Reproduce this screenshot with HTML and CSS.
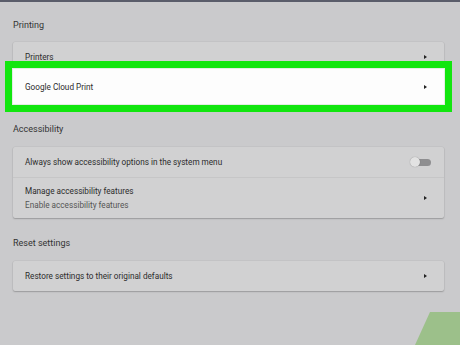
FILE: index.html
```html
<!DOCTYPE html>
<html>
<head>
<meta charset="utf-8">
<link rel="stylesheet" href="styles.css">
</head>
<body>
<div class="topbar"></div>
<main class="page">
  <section class="section">
    <h2 class="label">Printing</h2>
    <div class="card">
      <div class="row row-short"><span class="text">Printers</span><span class="chev"></span></div>
      <div class="row row-hl"><span class="text">Google Cloud Print</span><span class="chev"></span></div>
    </div>
  </section>
  <section class="section">
    <h2 class="label">Accessibility</h2>
    <div class="card">
      <div class="row row-a"><span class="text">Always show accessibility options in the system menu</span><span class="toggle"><span class="knob"></span></span></div>
      <div class="row row-b"><span class="text two"><span>Manage accessibility features</span><span class="sub">Enable accessibility features</span></span><span class="chev"></span></div>
    </div>
  </section>
  <section class="section">
    <h2 class="label">Reset settings</h2>
    <div class="card">
      <div class="row row-c"><span class="text">Restore settings to their original defaults</span><span class="chev"></span></div>
    </div>
  </section>
</main>
<div class="blob"></div>
</body>
</html>
```
FILE: styles.css
```css
html, body {
  margin: 0;
  padding: 0;
  height: 100%;
  overflow: hidden;
}
body {
  background: #cacacc;
  font-family: Roboto, "Liberation Sans", sans-serif;
  color: #2a2a2a;
  position: relative;
}
.topbar {
  height: 2px;
  background: #5a5d6a;
}
.page {
  padding: 0 16px 0 13px;
  display: flex;
  flex-direction: column;
}
.section {
  display: flex;
  flex-direction: column;
}
.label {
  margin: 0;
  font-weight: 400;
  font-size: 9px;
  color: #333;
  height: 18px;
  line-height: 18px;
  padding-top: 16px;
  padding-bottom: 9px;
}
.section:first-child .label {
  padding-top: 14px;
  padding-bottom: 8px;
}
.card {
  background: #d1d1d2;
  border-radius: 2px;
  box-shadow: 0 1px 1.5px rgba(0,0,0,0.22), 0 0 0 0.5px rgba(0,0,0,0.06);
  display: flex;
  flex-direction: column;
}
.row {
  display: flex;
  align-items: center;
  justify-content: space-between;
  padding: 0 17px 0 12px;
  font-size: 8.2px;
  color: #2c2c2c;
}
.row-short { height: 27px; padding-top: 2px; box-sizing: border-box; }
.row-hl {
  height: 35px;
  background: #fdfdfd;
  box-shadow: 0 0 0 1px #e4ece4, 0 0 0 8px #12e60f;
  position: relative;
}
.row-a { height: 30px; border-bottom: 1px solid #c6c6c7; }
.row-b { height: 40px; }
.row-c { height: 30px; }
.two {
  display: flex;
  flex-direction: column;
  gap: 4px;
}
.sub { color: #555; }
.chev {
  width: 0;
  height: 0;
  border-top: 2.5px solid transparent;
  border-bottom: 2.5px solid transparent;
  border-left: 3px solid #222;
}
.toggle {
  position: relative;
  width: 18px;
  height: 7px;
  border-radius: 4px;
  background: #8e8e90;
  margin-right: -4px;
}
.knob {
  position: absolute;
  left: -3px;
  top: -2px;
  width: 10px;
  height: 10px;
  border-radius: 50%;
  background: #e2e2e2;
  box-shadow: 0 0 1px rgba(0,0,0,0.4);
}
.blob {
  position: absolute;
  left: 415px;
  top: 312px;
  width: 45px;
  height: 33px;
  background: #9cc08a;
  clip-path: polygon(15px 0, 100% 0, 100% 100%, 0 100%);
}
```
